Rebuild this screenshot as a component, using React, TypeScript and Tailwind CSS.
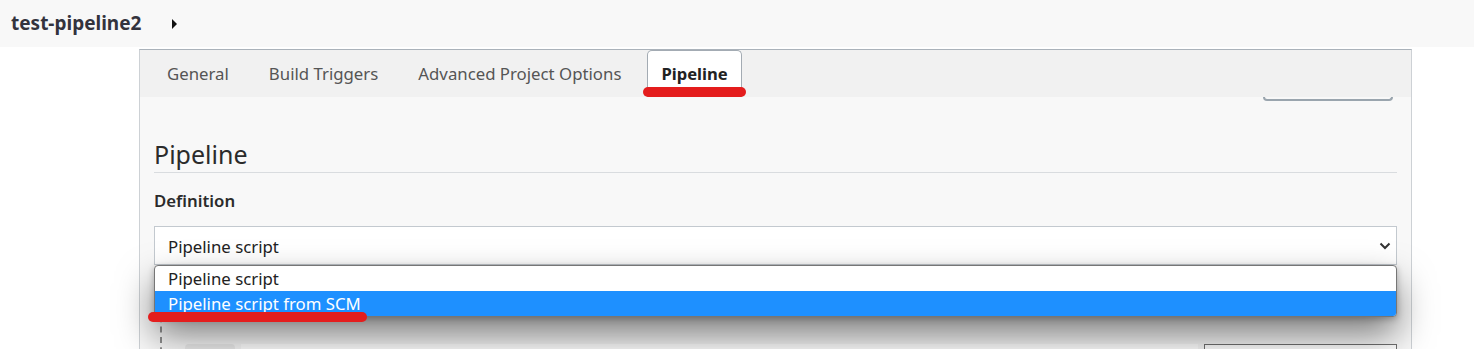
import React from "react";

function Tab({ label, active = false }: { label: string; active?: boolean }) {
  if (active) {
    return (
      <div className="relative flex h-[47px] items-center rounded-t-[5px] border-x border-t border-[#a3abb3] bg-white px-[13px] text-[16.6px] font-bold text-[#222]">
        {label}
        <span className="absolute -left-[5px] -right-[5px] bottom-0 h-[10px] rounded-full bg-[#e41d1d]" />
      </div>
    );
  }
  return (
    <div className="flex h-[47px] items-center px-[14px] text-[16.8px] text-[#555]">{label}</div>
  );
}

export default function App() {
  return (
    <div className="h-[349px] w-[1474px] overflow-hidden bg-white font-['Noto_Sans',sans-serif] text-[#333]">
      <header className="flex h-[47px] items-center bg-[#f8f8f8] pl-[11px]">
        <span className="text-[19px] font-bold leading-none text-[#33333d]">test-pipeline2</span>
        <span className="ml-[31px] h-0 w-0 border-y-[5px] border-l-[5px] border-y-transparent border-l-[#111]" />
      </header>

      <div className="ml-[139px] mt-[2px] w-[1273px] border-x border-t border-x-[#cdd1d5] border-t-[#aab2ba]">
        <nav className="flex h-[47px] items-end gap-[12px] bg-[#f1f1f1] pl-[13px]">
          <Tab label="General" />
          <Tab label="Build Triggers" />
          <Tab label="Advanced Project Options" />
          <Tab label="Pipeline" active />
        </nav>

        <div className="h-[260px] bg-[#f8f8f8] px-[14px]">
          <div className="ml-auto mr-[4px] h-[4px] w-[130px] rounded-b-[6px] border-x-2 border-b-2 border-[#9aa5ae]" />

          <h2 className="mt-[35px] border-b border-[#d9dcdf] text-[25px] leading-[36px] text-[#2b2b2b]">Pipeline</h2>

          <div className="mt-[16px] text-[16.8px] font-semibold leading-[24px] text-[#2b2b2b]">Definition</div>

          <div className="relative z-10 mt-[13px]">
            <div className="flex h-[39px] items-center justify-between border border-[#c3c9cf] bg-white pl-[13px] pr-[5px] pt-[3px] text-[16.8px] text-[#222]">
              <span>Pipeline script</span>
              <svg width="12" height="8" viewBox="0 0 12 8" fill="none" className="-mt-[3px]">
                <path d="M1.5 1.5 L6 6 L10.5 1.5" stroke="#333" strokeWidth="2" />
              </svg>
            </div>

            <div className="absolute left-0 right-0 top-full overflow-hidden rounded-[4px] border border-[#767676] bg-white text-[16.8px] shadow-[0_2px_6px_rgba(0,0,0,0.25),0_18px_36px_rgba(0,0,0,0.5)]">
              <div className="flex h-[25px] items-center pl-[13px] text-[#222]">Pipeline script</div>
              <div className="flex h-[25px] items-center bg-[#1e90ff] pl-[13px] text-white">Pipeline script from SCM</div>
            </div>

            <span className="absolute -left-[6px] top-[86px] h-[10px] w-[219px] rounded-full bg-[#e41d1d]" />
          </div>

          <div className="ml-[6px] mt-[20px] border-l-2 border-dashed border-[#8f8f8f] pl-[11px]">
            <div className="flex h-[28px] items-center gap-[30px] pl-[40px] pt-[22px]">
              <span className="h-[8px] w-[2px] bg-[#2b2b2b]" />
              <span className="h-[18px] w-[18px] rounded-full border border-[#bbb] bg-[#eee]" />
            </div>
            <div className="mt-[31px] flex h-[30px] items-start gap-[6px] pl-[12px]">
              <div className="h-[30px] w-[50px] rounded-t-[4px] bg-[#ebebeb]" />
              <div className="h-[30px] flex-1 bg-white" />
              <div className="h-[30px] w-[193px] border border-[#707070] bg-white" />
            </div>
          </div>
        </div>
      </div>
    </div>
  );
}
